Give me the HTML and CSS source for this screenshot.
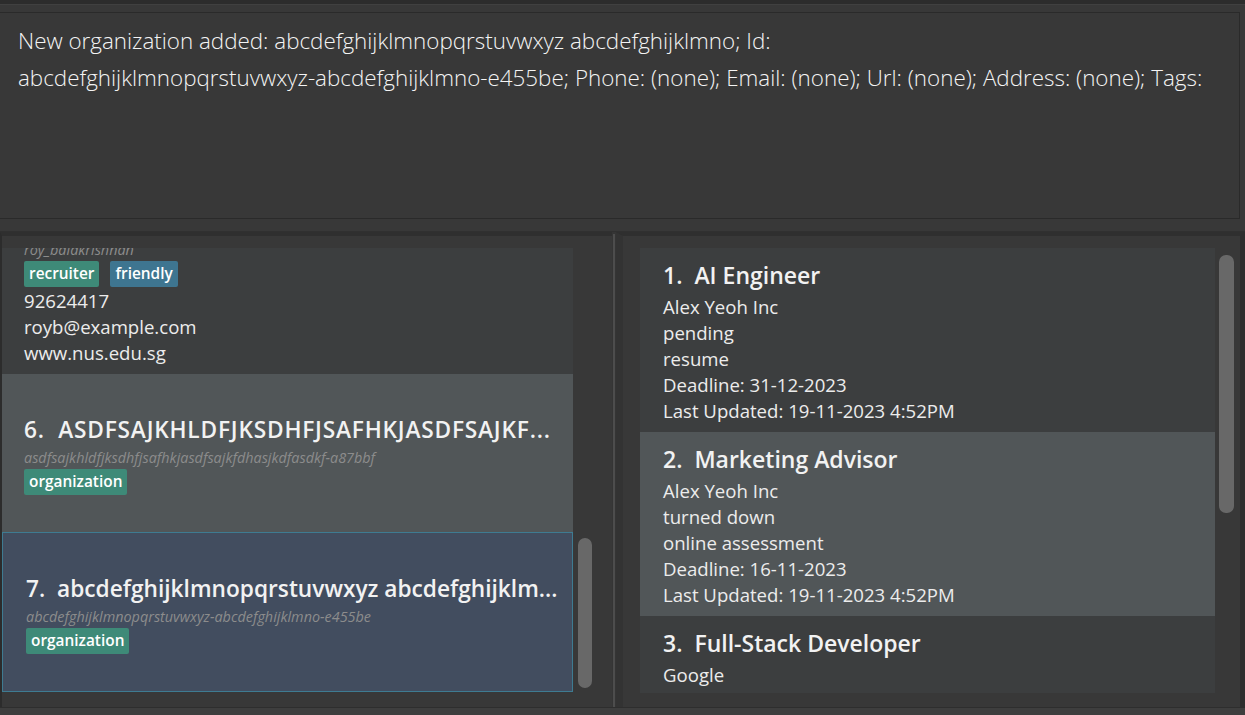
FILE: index.html
```html
<!DOCTYPE html>
<html lang="en">
<head>
<meta charset="utf-8">
<title>Applications</title>
<link rel="stylesheet" href="styles.css">
</head>
<body>
<div class="app">
  <div class="topbar"></div>
  <div class="result-wrap">
    <div class="result">
      <div class="result-line">New organization added: abcdefghijklmnopqrstuvwxyz abcdefghijklmno; Id:</div>
      <div class="result-line">abcdefghijklmnopqrstuvwxyz-abcdefghijklmno-e455be; Phone: (none); Email: (none); Url: (none); Address: (none); Tags:</div>
    </div>
  </div>
  <div class="panes">
    <div class="pane pane-left">
      <div class="list">
        <div class="list-inner left-inner">
          <div class="card card-even card-5">
            <div class="title">5.&nbsp;&nbsp;Roy Balakrishnan</div>
            <div class="ident">roy_balakrishnan</div>
            <div class="tags"><span class="tag tag-green">recruiter</span><span class="tag tag-blue">friendly</span></div>
            <div class="line">92624417</div>
            <div class="line">royb@example.com</div>
            <div class="line">www.nus.edu.sg</div>
          </div>
          <div class="card card-odd card-org">
            <div class="title title-caps">6.&nbsp;&nbsp;ASDFSAJKHLDFJKSDHFJSAFHKJASDFSAJKF...</div>
            <div class="ident">asdfsajkhldfjksdhfjsafhkjasdfsajkfdhasjkdfasdkf-a87bbf</div>
            <div class="tags"><span class="tag tag-green">organization</span></div>
          </div>
          <div class="card card-selected card-org">
            <div class="title">7.&nbsp;&nbsp;abcdefghijklmnopqrstuvwxyz abcdefghijklm...</div>
            <div class="ident">abcdefghijklmnopqrstuvwxyz-abcdefghijklmno-e455be</div>
            <div class="tags"><span class="tag tag-green">organization</span></div>
          </div>
        </div>
      </div>
      <div class="scrollbar"><div class="thumb thumb-left"></div></div>
    </div>
    <div class="divider"><div class="divider-line"></div></div>
    <div class="pane pane-right">
      <div class="list">
        <div class="list-inner">
          <div class="card job card-even">
            <div class="job-title">1.&nbsp;&nbsp;AI Engineer</div>
            <div class="line">Alex Yeoh Inc</div>
            <div class="line">pending</div>
            <div class="line">resume</div>
            <div class="line">Deadline: 31-12-2023</div>
            <div class="line">Last Updated: 19-11-2023 4:52PM</div>
          </div>
          <div class="card job card-odd">
            <div class="job-title">2.&nbsp;&nbsp;Marketing Advisor</div>
            <div class="line">Alex Yeoh Inc</div>
            <div class="line">turned down</div>
            <div class="line">online assessment</div>
            <div class="line">Deadline: 16-11-2023</div>
            <div class="line">Last Updated: 19-11-2023 4:52PM</div>
          </div>
          <div class="card job card-even">
            <div class="job-title">3.&nbsp;&nbsp;Full-Stack Developer</div>
            <div class="line">Google</div>
            <div class="line">pending</div>
            <div class="line">interview</div>
          </div>
        </div>
      </div>
      <div class="scrollbar scrollbar-right"><div class="thumb thumb-right"></div></div>
    </div>
  </div>
  <div class="bottombar"></div>
</div>
</body>
</html>
```
FILE: styles.css
```css
* { box-sizing: border-box; }

html, body {
  margin: 0;
  padding: 0;
  background: #383838;
  width: 1245px;
  height: 715px;
  overflow: hidden;
  font-family: "Open Sans", "Noto Sans", sans-serif;
  color: #ffffff;
}

.app {
  display: flex;
  flex-direction: column;
  height: 715px;
}

.topbar {
  height: 5px;
  flex: none;
  background: #2c2c2c;
  border-bottom: 1px solid #404040;
}

.result-wrap {
  flex: none;
  padding: 7px 5px 7px 0;
  height: 226px;
}

.result {
  height: 207px;
  border: 1px solid #2a2a2a;
  border-left: none;
  background: #383838;
  padding: 9px 0 0 18px;
}

.result-line {
  font-size: 22.4px;
  font-weight: 300;
  line-height: 37px;
  white-space: nowrap;
  color: #f4f4f4;
}

.panes {
  flex: none;
  display: flex;
  height: 477px;
  border-top: 1px solid #303030;
  border-bottom: 1px solid #2e2e2e;
}

.pane {
  display: flex;
  height: 100%;
  padding-top: 12px;
  border-top: 4px solid #2f2f2f;
}

.pane-left {
  width: 612px;
  border-left: 2px solid #2c2c2c;
}

.pane-right {
  width: 629px;
  padding-left: 17px;
  border-left: 7px solid #333333;
  border-right: 5px solid #2e2e2e;
}

.divider {
  width: 4px;
  background: #353535;
  display: flex;
  justify-content: center;
  padding-top: 2px;
}

.divider-line {
  width: 2px;
  background: #4d4d4d;
}

.list {
  height: 445px;
  overflow: hidden;
}

.pane-left .list { width: 571px; }
.pane-right .list { width: 575px; }

.list-inner {
  display: flex;
  flex-direction: column;
}

.left-inner { margin-top: -49px; }

.card {
  display: flex;
  flex-direction: column;
  padding-left: 22px;
}

.card-even { background: #3c3e3f; }
.card-odd { background: #515658; }
.card-selected {
  background: #424d5f;
  border: 1px solid #3e7b91;
  padding-left: 23px;
}

.card-5 { padding-top: 8px; padding-bottom: 8px; }
.card-org { padding-top: 41px; padding-bottom: 37px; }

.title {
  font-size: 22.7px;
  font-weight: 600;
  line-height: 30px;
  white-space: nowrap;
  color: #f2f2f2;
}

.title-caps { letter-spacing: 0.8px; }

.ident {
  margin-top: 3px;
  font-size: 14.4px;
  font-style: italic;
  line-height: 20px;
  color: #8c8c8c;
  white-space: nowrap;
}

.tags {
  margin-top: 1px;
  display: flex;
  gap: 11px;
}

.tag {
  height: 26px;
  line-height: 26px;
  padding: 0 5px;
  border-radius: 2px;
  font-size: 15.4px;
  font-weight: 600;
  color: #ffffff;
}

.tag-green { background: #3e8a78; }
.tag-blue { background: #3e7590; }

.line {
  font-size: 18.6px;
  line-height: 26px;
  white-space: nowrap;
  color: #ececec;
}

.tags + .line { margin-top: 1px; }

.job {
  padding-left: 23px;
  padding-top: 11px;
  padding-bottom: 8px;
}

.job-title {
  font-size: 23px;
  font-weight: 600;
  line-height: 32px;
  margin-bottom: 3px;
  white-space: nowrap;
  color: #f2f2f2;
}

.scrollbar {
  width: 14px;
  margin-left: 5px;
  height: 445px;
  display: flex;
  flex-direction: column;
}

.scrollbar-right {
  width: 15px;
  margin-left: 4px;
}

.thumb {
  width: 100%;
  background: #686868;
  border-radius: 7px;
}

.thumb-left {
  height: 150px;
  margin-top: 290px;
}

.thumb-right {
  height: 258px;
  margin-top: 7px;
}

.bottombar {
  flex: 1;
  background: #3e3e3e;
}
```
